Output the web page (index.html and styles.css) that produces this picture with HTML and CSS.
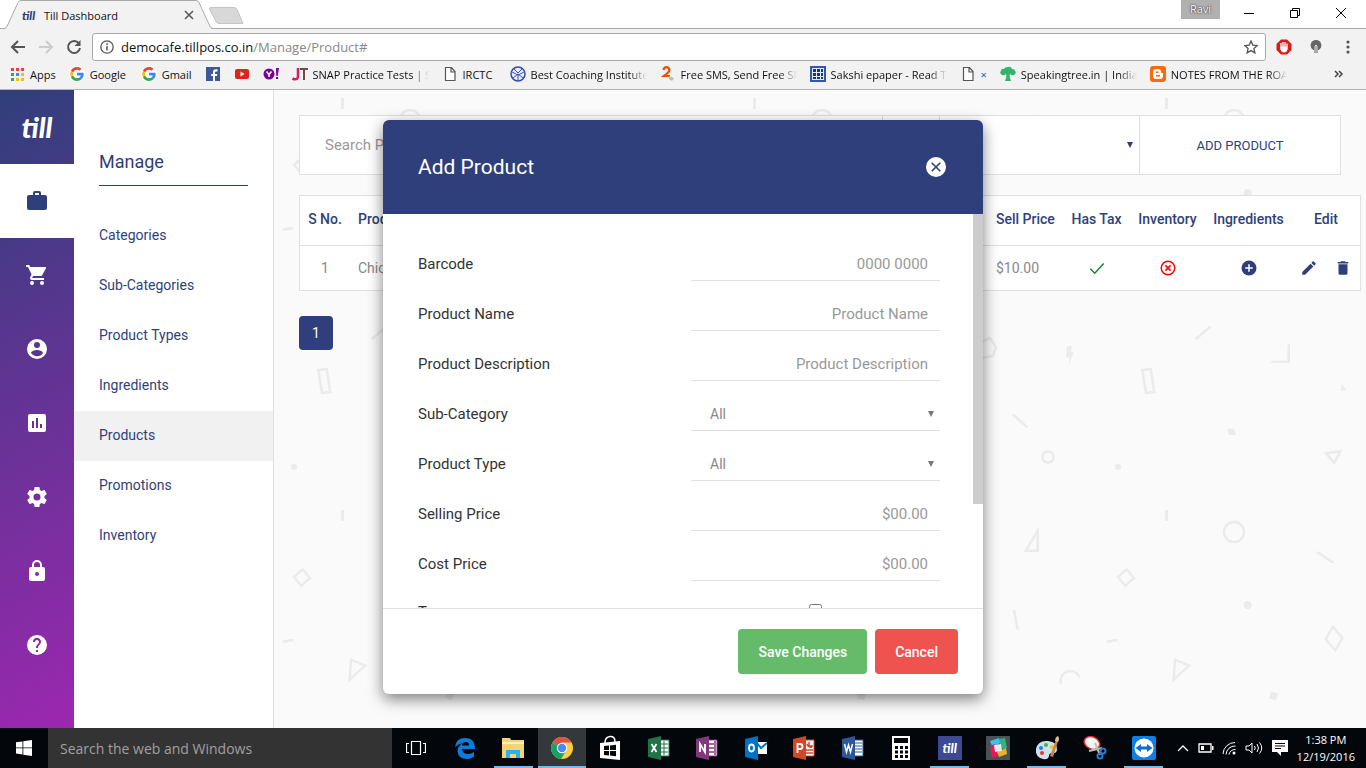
FILE: index.html
```html
<!DOCTYPE html>
<html lang="en">
<head>
<meta charset="utf-8">
<title>Till Dashboard</title>
<link rel="stylesheet" href="styles.css">
</head>
<body>
<header class="browser">
  <div class="tabstrip">
    <svg class="tab-shape" width="250" height="29" viewBox="0 0 250 29" aria-hidden="true">
      <path d="M0 28.500H6L18 2.500Q19 .500 21 .500H196Q198 .500 199 2.500L211 28.500V29H0Z" fill="#f2f2f2"/>
      <path d="M0 28.500H4Q6 28.500 7 26.500L18 2.500Q19 .500 21 .500H196Q198 .500 199 2.500L210 26.500Q211 28.500 213 28.500H250" fill="none" stroke="#aaa"/>
      <path d="M211 7.500H234Q236 7.500 237 9.500L243 23.500H219Q217 23.500 216 21.500L209.500 9Q209 7.500 211 7.500Z" fill="#d8d8d8" stroke="#c4c4c4"/>
    </svg>
    <div class="tab">
      <span class="tab-logo">till</span>
      <span class="tab-title">Till Dashboard</span>
      <button class="plain" aria-label="Close tab"><svg width="10" height="10" viewBox="0 0 10 10"><path d="M1 1l8 8M9 1L1 9" stroke="#555" stroke-width="1.500"/></svg></button>
    </div>
    <div class="window-controls">
      <span class="profile">Ravi</span>
      <button class="plain win" aria-label="Minimize"><svg width="10" height="10"><path d="M0 5.500h10" stroke="#000"/></svg></button>
      <button class="plain win" aria-label="Restore"><svg width="10" height="10"><path d="M.5 2.500h7v7h-7zM2.500 2.500v-2h7v7h-2" fill="none" stroke="#000"/></svg></button>
      <button class="plain win" aria-label="Close"><svg width="10" height="10"><path d="M0 0l10 10M10 0L0 10" stroke="#000"/></svg></button>
    </div>
  </div>
  <div class="toolbar">
    <button class="plain nav" aria-label="Back"><svg width="16" height="14" viewBox="0 0 16 14"><path d="M15 7H2M8 1L2 7l6 6" fill="none" stroke="#555" stroke-width="2"/></svg></button>
    <button class="plain nav" aria-label="Forward"><svg width="16" height="14" viewBox="0 0 16 14"><path d="M1 7h13M8 1l6 6-6 6" fill="none" stroke="#ccc" stroke-width="2"/></svg></button>
    <button class="plain nav" aria-label="Reload"><svg width="16" height="16" viewBox="0 0 16 16"><path d="M13 4.500A6 6 0 1 0 14 9" fill="none" stroke="#555" stroke-width="2"/><path d="M14.500 1v6h-6z" fill="#555"/></svg></button>
    <div class="omnibox">
      <svg width="14" height="14" viewBox="0 0 14 14"><circle cx="7" cy="7" r="6.200" fill="none" stroke="#555" stroke-width="1.300"/><path d="M7 6v4.500M7 3.300v1.600" stroke="#555" stroke-width="1.500"/></svg>
      <span class="url">democafe.tillpos.co.in<span class="path">/Manage/Product#</span></span>
      <svg width="14" height="14" viewBox="0 0 14 14"><path d="M7 1l1.800 4.100 4.500.4-3.400 3 1 4.400L7 10.600l-3.900 2.300 1-4.400-3.400-3 4.500-.4z" fill="none" stroke="#555" stroke-width="1.300"/></svg>
    </div>
    <div class="extensions">
      <svg width="16" height="16" viewBox="0 0 16 16"><path d="M5 .5h6L15.500 5v6L11 15.500H5L.5 11V5z" fill="#dd1a1a"/><path d="M5 9V4M7 8V3M9 8V3M11 8V4.500" stroke="#fff" stroke-width="1.300"/><path d="M4.400 7.500h7.200V10q-.6 3.500-3.600 3.500T4 9z" fill="#fff"/></svg>
      <svg width="12" height="14" viewBox="0 0 12 14"><path d="M6 0a5.300 5.300 0 0 1 3 9.700V10H3v-.3A5.300 5.300 0 0 1 6 0z" fill="#666"/><path d="M5 10V6q1-2 2 0v4" stroke="#ddd" fill="#888"/><path d="M4 10h4v3H4z" fill="#aaa"/></svg>
      <svg width="4" height="14" viewBox="0 0 4 14" fill="#555"><circle cx="2" cy="2" r="1.600"/><circle cx="2" cy="7" r="1.600"/><circle cx="2" cy="12" r="1.600"/></svg>
    </div>
  </div>
  <nav class="bookmarks" aria-label="Bookmarks">
    <a href="#"><svg width="16" height="16" viewBox="0 0 16 16"><g fill="#ea4335"><path d="M2 2h3v3H2zM7 2h3v3H7zM12 2h3v3h-3z"/></g><path d="M2 7h3v3H2z" fill="#34a853"/><path d="M7 7h3v3H7z" fill="#4285f4"/><path d="M12 7h3v3h-3zM7 12h3v3H7zM12 12h3v3h-3z" fill="#fbbc05"/><path d="M2 12h3v3H2z" fill="#34a853"/></svg><span>Apps</span></a>
    <a href="#"><svg width="16" height="16" viewBox="0 0 48 48"><use href="#google-g"/></svg><span class="mail">Google</span></a>
    <a href="#"><svg width="16" height="16" viewBox="0 0 48 48"><use href="#google-g"/></svg><span>Gmail</span></a>
    <a href="#" aria-label="Facebook"><svg width="16" height="16" viewBox="0 0 16 16"><path d="M1 1h14v14H1z" fill="#3b5998"/><path d="M10 15V10h2l.4-2H10V6.500q0-1.100 1.200-1.100h1.300V3.300H11Q8 3.300 8 6v2H6.200v2H8v5z" fill="#fff"/></svg></a>
    <a href="#" aria-label="YouTube"><svg width="16" height="16" viewBox="0 0 16 16"><rect x="1" y="3" width="14" height="10" rx="2" fill="#e62117"/><path d="M6.500 5.500v5l4-2.500z" fill="#fff"/></svg></a>
    <a href="#" aria-label="Yahoo"><svg width="16" height="16" viewBox="0 0 16 16"><circle cx="6" cy="8" r="5.500" fill="#7b0099"/><path d="M3.500 5.500L6 8.500l2.500-3M6 8.500V11" stroke="#fff" stroke-width="1.500" fill="none"/><path d="M13 2h3l-1.300 8h-1.400zM13 11h2v2h-2z" fill="#7b0099"/></svg></a>
    <a href="#"><svg width="16" height="16" viewBox="0 0 16 16"><path d="M6 2v8q0 4-4 3.200L.5 12.500" fill="none" stroke="#d81b60" stroke-width="2.500"/><path d="M8 3h8M12 3v11" stroke="#6d4c41" stroke-width="2"/></svg><span class="long">SNAP Practice Tests | SNAP</span></a>
    <a href="#"><svg width="16" height="16" viewBox="0 0 16 16"><use href="#page"/></svg><span class="short">IRCTC</span></a>
    <a href="#"><svg width="16" height="16" viewBox="0 0 16 16"><circle cx="8" cy="8" r="7" fill="#e8edfa" stroke="#3949ab" stroke-width="1.500"/><path d="M2 6l6 3 6-3M8 9v6M4 3l4 4 4-4M3 12l5-4 5 4" stroke="#3f51b5" fill="none"/></svg><span class="long">Best Coaching Institute</span></a>
    <a href="#"><svg width="16" height="16" viewBox="0 0 16 16"><path d="M3.500 4Q4 1.200 6.500 1.200T9.500 4Q9.500 6 4 10h6" fill="none" stroke="#e65100" stroke-width="2.200"/><path d="M9 10l5 2-2 3-3-2z" fill="#bbb"/></svg><span class="long">Free SMS, Send Free SMS</span></a>
    <a href="#"><svg width="16" height="16" viewBox="0 0 16 16"><path d="M0 0h16v16H0z" fill="#3157b5"/><path d="M2 2h12v12H2z" fill="#e3eaf5"/><path d="M3 3h3v3H3zM7 3h3v3H7zM11 3h2v3h-2zM3 7h3v3H3zM7 7h3v3H7zM11 7h2v3h-2zM3 11h3v2H3zM7 11h3v2H7zM11 11h2v2h-2z" fill="#123c6b"/></svg><span class="long">Sakshi epaper - Read Telugu</span></a>
    <a href="#"><svg width="16" height="16" viewBox="0 0 16 16"><use href="#page"/></svg><span class="blue">×</span></a>
    <a href="#"><svg width="16" height="16" viewBox="0 0 16 16"><path d="M8 1q3-1 4 2 3 0 3 2 2 2-1 4-2 1-4-1-1 3 1 7H5q2-4 1-7-2 2-4 1-3-2-1-4 0-3 3-2 1-2 4-2z" fill="#35b368"/></svg><span class="long">Speakingtree.in | India's</span></a>
    <a href="#"><svg width="16" height="16" viewBox="0 0 16 16"><rect width="16" height="16" rx="3" fill="#f96a0e"/><path d="M6 3h2.500Q11 3 11 6q0 1 1 1 1 0 1 1v2q0 3-3 3H6q-3 0-3-3V6q0-3 3-3z" fill="#fff"/><path d="M6 6.200h2.500M6 9.800h4" stroke="#f96a0e" stroke-width="1.500"/></svg><span class="long">NOTES FROM THE ROAD</span></a>
    <button class="plain more" aria-label="More bookmarks"><svg width="10" height="8" viewBox="0 0 10 8"><path d="M1 1l3 3-3 3M5 1l3 3-3 3" fill="none" stroke="#444" stroke-width="1.500"/></svg></button>
  </nav>
</header>

<div class="app">
  <nav class="rail" aria-label="Main">
    <a class="logo" href="#">till</a>
    <a class="active" href="#" aria-label="Manage"><svg viewBox="0 0 24 24"><path d="M10 2h4a2 2 0 0 1 2 2v2h4a2 2 0 0 1 2 2v11a2 2 0 0 1-2 2H4a2 2 0 0 1-2-2V8a2 2 0 0 1 2-2h4V4a2 2 0 0 1 2-2zm4 4V4h-4v2z"/></svg></a>
    <a href="#" aria-label="Orders"><svg viewBox="0 0 24 24"><path d="M17 18a2 2 0 1 1 0 4 2 2 0 0 1 0-4zM1 2h3.270l.94 2H20a1 1 0 0 1 .88 1.480l-3.580 6.470c-.34.610-1 1.050-1.750 1.050H8.100l-.9 1.630-.03.120c0 .140.110.250.250.250H19v2H7a2 2 0 0 1-2-2c0-.350.090-.680.240-.960l1.360-2.450L3 4H1zm6 16a2 2 0 1 1 0 4 2 2 0 0 1 0-4z"/></svg></a>
    <a href="#" aria-label="Customers"><svg viewBox="0 0 24 24"><path d="M12 19.200c-2.500 0-4.710-1.280-6-3.200.03-2 4-3.100 6-3.100s5.970 1.100 6 3.100a7.230 7.230 0 0 1-6 3.200M12 5a3 3 0 1 1 0 6 3 3 0 0 1 0-6m0-3a10 10 0 1 0 0 20 10 10 0 0 0 0-20z"/></svg></a>
    <a href="#" aria-label="Reports"><svg viewBox="0 0 24 24"><path d="M19 3H5a2 2 0 0 0-2 2v14a2 2 0 0 0 2 2h14a2 2 0 0 0 2-2V5a2 2 0 0 0-2-2zM9 17H7v-7h2zm4 0h-2V7h2zm4 0h-2v-4h2z"/></svg></a>
    <a href="#" aria-label="Settings"><svg viewBox="0 0 24 24"><path d="M12 15.500a3.500 3.500 0 1 1 0-7 3.500 3.500 0 0 1 0 7m7.430-2.530c.04-.320.070-.640.070-.970s-.03-.660-.070-1l2.110-1.630c.190-.150.240-.420.120-.640l-2-3.460c-.120-.220-.390-.310-.610-.220l-2.490 1c-.520-.390-1.060-.730-1.690-.980l-.370-2.650A.506.506 0 0 0 14 2h-4c-.250 0-.460.180-.5.420l-.370 2.650c-.630.250-1.170.590-1.690.980l-2.490-1c-.220-.090-.490 0-.610.220l-2 3.460c-.130.220-.070.490.120.640L4.570 11c-.040.340-.070.670-.070 1s.03.650.070.970l-2.110 1.660c-.190.150-.250.420-.120.640l2 3.460c.12.220.39.300.61.220l2.490-1.010c.52.400 1.060.740 1.690.990l.37 2.650c.04.240.25.420.5.420h4c.25 0 .46-.180.5-.420l.37-2.650c.63-.260 1.170-.590 1.690-.990l2.490 1.010c.22.080.49 0 .61-.220l2-3.460c.12-.220.07-.490-.12-.640z"/></svg></a>
    <a href="#" aria-label="Lock"><svg viewBox="0 0 24 24"><path d="M12 17a2 2 0 1 0 0-4 2 2 0 0 0 0 4m6-9a2 2 0 0 1 2 2v10a2 2 0 0 1-2 2H6a2 2 0 0 1-2-2V10a2 2 0 0 1 2-2h1V6a5 5 0 0 1 10 0v2zm-6-5a3 3 0 0 0-3 3v2h6V6a3 3 0 0 0-3-3z"/></svg></a>
    <a href="#" aria-label="Help"><svg viewBox="0 0 24 24"><path d="M15.070 11.250l-.9.920C13.450 12.890 13 13.500 13 15h-2v-.5c0-1.110.450-2.110 1.170-2.830l1.240-1.260A2 2 0 1 0 10 9H8a4 4 0 1 1 7.070 2.250M13 19h-2v-2h2M12 2a10 10 0 1 0 0 20 10 10 0 0 0 0-20z"/></svg></a>
  </nav>
  <nav class="submenu" aria-labelledby="manage-title">
    <h2 id="manage-title">Manage</h2>
    <ul>
      <li><a href="#">Categories</a></li>
      <li><a href="#">Sub-Categories</a></li>
      <li><a href="#">Product Types</a></li>
      <li><a href="#">Ingredients</a></li>
      <li><a class="current" href="#">Products</a></li>
      <li><a href="#">Promotions</a></li>
      <li><a href="#">Inventory</a></li>
    </ul>
  </nav>
  <main class="content">
    <svg class="backdrop" aria-hidden="true">
      <defs>
        <pattern id="confetti" patternUnits="userSpaceOnUse" x="-138" y="0" width="412" height="412">
          <g fill="none" stroke="#ebebeb" stroke-width="2.500">
            <path d="M206.500 8v11" stroke-width="3"/>
            <circle cx="274" cy="30" r="10"/>
            <path d="M166.700 67.300l7.300 8.700-8.700 7.700-7.300-8.700zM65.700 48.700h12v-20zM357 50l16.300 10.700M54 108l3.700 19.700M146.700 139.700l10.600-1.700M373 124.700l9.300 11.300-7 12.300-9.600-11.300zM215 157.700l14 6-15.300 14zM101 182a9.700 9.700 0 1 1 18.700-6.300"/>
            <path d="M52.700 324.300l14.600 13M366 363.300l14.300-2-6 11.400zM30 248l6 9-3 9-11 2-2-15zM235.700 249.300l15-13M182.300 280l8.400-1 3.600 23-8.300 1z"/>
            <circle cx="88" cy="367" r="5.600"/>
          </g>
          <g fill="#ebebeb">
            <circle cx="287.700" cy="103" r="4"/>
            <circle cx="158" cy="377" r="3"/>
            <path d="M311 189.500l7 1.800-1.800 7-7-1.800zM267 338.700h7l2 6.300h-6.700zM106.700 256.700l5.300-1.400-1 6.700 2.700.3-5.400 14.400 1.400-9-3.700-.4zM310 272.700l2-2h15.300v-15l2.700-3v20zM381.700 294.300l4.600 5.400-5.300 1.300z"/>
          </g>
        </pattern>
      </defs>
      <rect width="100%" height="100%" fill="url(#confetti)"/>
    </svg>
    <form class="filters">
      <input type="search" placeholder="Search Product" aria-label="Search product">
      <button class="find" type="button" aria-label="Search"><svg width="18" height="18" viewBox="0 0 18 18"><path d="M12 12l5 5M7 13A6 6 0 1 0 7 1a6 6 0 0 0 0 12z" fill="none" stroke="#2f3f7b" stroke-width="2"/></svg></button>
      <div class="picker">
        <select aria-label="Category"><option>All</option></select>
        <svg width="6" height="6" viewBox="0 0 6 6"><path d="M0 0h6L3 6z" fill="#2f3f7b"/></svg>
      </div>
      <button class="add" type="button">ADD PRODUCT</button>
    </form>
    <div class="table-wrap">
      <table>
        <colgroup><col class="c-no"><col><col class="c-price"><col class="c-tax"><col class="c-inv"><col class="c-ing"><col class="c-edit"></colgroup>
        <thead><tr><th class="mid">S No.</th><th>Product</th><th>Sell Price</th><th class="mid">Has Tax</th><th class="mid">Inventory</th><th class="mid">Ingredients</th><th class="mid">Edit</th></tr></thead>
        <tbody><tr>
          <td class="mid">1</td><td>Chicken</td><td>$10.00</td>
          <td class="mid"><svg width="18" height="18" viewBox="0 0 24 24"><path d="M3 13l6 6L21 6" fill="none" stroke="#178536" stroke-width="2"/></svg></td>
          <td class="mid"><svg width="18" height="18" viewBox="0 0 24 24"><circle cx="12" cy="12" r="9" fill="none" stroke="red" stroke-width="2"/><path d="M8.500 8.500l7 7M15.500 8.500l-7 7" stroke="red" stroke-width="2"/></svg></td>
          <td class="mid"><button class="plain" aria-label="Add ingredient"><svg width="18" height="18" viewBox="0 0 24 24"><circle cx="12" cy="12" r="10" fill="#2f3f7b"/><path d="M12 7v10M7 12h10" stroke="#fff" stroke-width="2"/></svg></button></td>
          <td><div class="row-actions"><button class="plain" aria-label="Edit"><svg width="18" height="18" viewBox="0 0 24 24" fill="#2f3f7b"><path d="M20.710 7.040c.39-.390.390-1.040 0-1.410l-2.340-2.340c-.370-.390-1.020-.390-1.410 0l-1.840 1.830 3.750 3.750M3 17.250V21h3.750L17.810 9.930l-3.750-3.750z"/></svg></button><button class="plain" aria-label="Delete"><svg width="18" height="18" viewBox="0 0 24 24" fill="#2f3f7b"><path d="M19 4h-3.500l-1-1h-5l-1 1H5v2h14M6 19a2 2 0 0 0 2 2h8a2 2 0 0 0 2-2V7H6z"/></svg></button></div></td>
        </tr></tbody>
      </table>
    </div>
    <button class="page-number" type="button">1</button>
  </main>

  <div class="overlay">
    <section class="modal" role="dialog" aria-labelledby="modal-title">
      <header class="modal-head">
        <h1 id="modal-title">Add Product</h1>
        <button class="plain" aria-label="Close dialog"><svg width="24" height="24" viewBox="0 0 24 24"><circle cx="12" cy="12" r="10" fill="#fff"/><path d="M7.700 7.700l8.600 8.600M16.300 7.700l-8.600 8.600" stroke="#2f3f7b" stroke-width="1.600"/></svg></button>
      </header>
      <div class="modal-body">
        <form class="fields">
          <label for="barcode">Barcode</label><input id="barcode" type="text" placeholder="0000 0000">
          <label for="name">Product Name</label><input id="name" type="text" placeholder="Product Name">
          <label for="desc">Product Description</label><input id="desc" type="text" placeholder="Product Description">
          <label for="subcat">Sub-Category</label><div class="choice"><select id="subcat"><option>All</option></select><svg width="6" height="6" viewBox="0 0 6 6"><path d="M0 0h6L3 6z" fill="#777"/></svg></div>
          <label for="ptype">Product Type</label><div class="choice"><select id="ptype"><option>All</option></select><svg width="6" height="6" viewBox="0 0 6 6"><path d="M0 0h6L3 6z" fill="#777"/></svg></div>
          <label for="sell">Selling Price</label><input id="sell" type="text" placeholder="$00.00">
          <label for="cost">Cost Price</label><input id="cost" type="text" placeholder="$00.00">
          <label class="tick-label" for="tax">Tax</label><div class="tick"><input id="tax" type="checkbox"></div>
        </form>
        <div class="scroll-thumb"></div>
      </div>
      <footer class="modal-foot">
        <button class="save" type="button">Save Changes</button>
        <button class="cancel" type="button">Cancel</button>
      </footer>
    </section>
  </div>
</div>

<footer class="taskbar">
  <button class="plain start" aria-label="Start"><svg width="16" height="16" viewBox="0 0 16 16" fill="#fff"><path d="M0 2.300L6.500 1.400v6.100H0zM7.300 1.300L16 0v7.500H7.300zM0 8.300h6.500v6.200L0 13.600zM7.300 8.300H16V16l-8.700-1.300z"/></svg></button>
  <input class="win-search" type="text" placeholder="Search the web and Windows" aria-label="Search the web and Windows">
  <div class="apps">
    <button class="plain" aria-label="Task view"><svg width="20" height="16" viewBox="0 0 20 16"><path d="M5.500 1.500h9v13h-9zM3 3.500H.5v9H3M17 3.500h2.500v9H17" fill="none" stroke="#fff" stroke-width="1.200"/></svg></button>
    <button class="plain" aria-label="Edge"><svg width="22" height="22" viewBox="0 0 22 22"><path d="M1 10Q2 1 11 1q10 0 10 11H8q.500 5 6 5 3 0 6-2v4.500Q17 22 13 22 4 22 3.500 14 3.500 9 9 6 4 7 1 10zm7-1.500h7Q15 4.500 11.500 5 8.500 5 8 8.500z" fill="#0b7bdc"/></svg></button>
    <button class="plain open" aria-label="Explorer"><svg width="22" height="22" viewBox="0 0 22 22"><path d="M0 1h8l1 2h13v18H0z" fill="#f5d573"/><path d="M0 5h22v2H0z" fill="#fff0b5"/><path d="M4 21v-8h14v8h-4v-4H8v4z" fill="#30b0e8"/></svg></button>
    <button class="plain open focused" aria-label="Chrome"><svg width="22" height="22" viewBox="0 0 22 22"><circle cx="11" cy="11" r="11" fill="#ffcd40"/><path d="M11 11L1.500 5.500A11 11 0 0 1 20.500 5.500H11z" fill="#de5246"/><path d="M1.500 5.500A11 11 0 0 0 10 22l5.500-9L11 11z" fill="#1aa260"/><circle cx="11" cy="11" r="5.200" fill="#fff"/><circle cx="11" cy="11" r="4.200" fill="#4a8af4"/></svg></button>
    <button class="plain" aria-label="Store"><svg width="22" height="26" viewBox="0 0 22 26"><path d="M1 8l20-2v19L1 23z" fill="#fff"/><path d="M6 8Q6 2 11 1.500T16 7" fill="none" stroke="#fff" stroke-width="1.500"/><path d="M5 11l5-.5V15H5zM11 10.400l6-.6V15h-6zM5 16h5v4.500L5 20zM11 16h6v5.200l-6-.6z" fill="#05070b"/></svg></button>
    <button class="plain" aria-label="Excel"><svg width="22" height="24" viewBox="0 0 22 24"><path d="M11 4h10v16H11z" fill="#fff" stroke="#217346"/><path d="M12 8h8M12 12h8M12 16h8M16 5v14" stroke="#217346"/><path d="M0 3l13-3v24L0 21z" fill="#217346"/><path d="M3.500 8l5 8M8.500 8l-5 8" stroke="#fff" stroke-width="1.800"/></svg></button>
    <button class="plain" aria-label="OneNote"><svg width="22" height="24" viewBox="0 0 22 24"><path d="M11 4h10v16H11z" fill="#fff" stroke="#80397b"/><path d="M13 8h5M13 12h5M13 16h5M19 5v14" stroke="#80397b" stroke-width="1.500"/><path d="M0 3l13-3v24L0 21z" fill="#80397b"/><path d="M4 16V8l5 8V8" stroke="#fff" stroke-width="1.800" fill="none"/></svg></button>
    <button class="plain" aria-label="Outlook"><svg width="22" height="24" viewBox="0 0 22 24"><path d="M11 6h11v12H11z" fill="#fff"/><path d="M12 7l4 5 6-5" fill="none" stroke="#0072c6" stroke-width="2"/><path d="M0 3l13-3v24L0 21z" fill="#0072c6"/><ellipse cx="6.500" cy="12" rx="2.500" ry="3.500" fill="none" stroke="#fff" stroke-width="1.800"/></svg></button>
    <button class="plain" aria-label="PowerPoint"><svg width="22" height="24" viewBox="0 0 22 24"><path d="M11 4h10v16H11z" fill="#fff" stroke="#d24726"/><path d="M13 14h7M13 17h7M16 6v4h4M14 8a4 4 0 0 0 5 3" stroke="#d24726" fill="none" stroke-width="1.500"/><path d="M0 3l13-3v24L0 21z" fill="#d24726"/><path d="M4.500 17V8H7q2.500 0 2.500 2.500T7 13H4.500" stroke="#fff" stroke-width="1.800" fill="none"/></svg></button>
    <button class="plain" aria-label="Word"><svg width="22" height="24" viewBox="0 0 22 24"><path d="M11 4h10v16H11z" fill="#fff" stroke="#2b579a"/><path d="M12 7h8M12 10h8M12 13h8M12 16h8" stroke="#2b579a"/><path d="M0 3l13-3v24L0 21z" fill="#2b579a"/><path d="M2.500 8l2 8 2-7 2 7 2-8" stroke="#fff" stroke-width="1.500" fill="none"/></svg></button>
    <button class="plain" aria-label="Calculator"><svg width="18" height="24" viewBox="0 0 18 24"><path d="M0 0h18v24H0z" fill="#fff"/><path d="M2 2h14v5H2zM3 10h3v3H3zM8 10h3v3H8zM13 10h3v3h-3zM3 14.500h3v3H3zM8 14.500h3v3H8zM13 14.500h3v3h-3zM3 19h3v3H3zM8 19h3v3H8zM13 19h3v3h-3z" fill="#05070b"/></svg></button>
    <button class="plain open" aria-label="Till"><span class="till-app">till</span></button>
    <button class="plain" aria-label="Slack"><svg width="24" height="24" viewBox="0 0 24 24"><path d="M0 0h24v24H0z" fill="#4a5157"/><path d="M4 5l9-3 2 5-9 3z" fill="#36c5f0"/><path d="M13 3l6-1 2 10-6 1z" fill="#2eb67d"/><path d="M4 10l5-2 3 12-6 2z" fill="#e8175d"/><path d="M11 16l9-4 1 6-8 3z" fill="#ecb22e"/><path d="M8 9l7-1 1 7-7 1z" fill="#e8eaee"/></svg></button>
    <button class="plain open" aria-label="Paint"><svg width="24" height="24" viewBox="0 0 24 24"><path d="M1 13Q3 4 13 5q10 1 9 9-1 4-5 3-3 0-3 3-1 4-6 3-8-2-7-10z" fill="#cfe0ee"/><circle cx="6" cy="12" r="2" fill="#2c7be5"/><circle cx="11" cy="9" r="2" fill="#3cb54a"/><circle cx="17" cy="11" r="2" fill="#f6c31c"/><circle cx="7" cy="17" r="2" fill="#e03c31"/><path d="M15 20L21 4l2 1-5 16z" fill="#c9873c"/><path d="M20 5q0-4 3-5 2 3 0 6z" fill="#e7bd83"/></svg></button>
    <button class="plain" aria-label="Snipping Tool"><svg width="24" height="24" viewBox="0 0 24 24"><ellipse cx="9" cy="7" rx="8" ry="6" transform="rotate(25 9 7)" fill="#f4f4f4" stroke="#d33" stroke-width="1.500"/><path d="M6 15l13-3M12 7l5 12" stroke="#bbb" stroke-width="2"/><circle cx="20" cy="15" r="2.500" fill="none" stroke="#2c7bc5" stroke-width="2"/><circle cx="17" cy="20" r="2.500" fill="none" stroke="#2c7bc5" stroke-width="2"/></svg></button>
    <button class="plain open" aria-label="TeamViewer"><svg width="24" height="24" viewBox="0 0 24 24"><rect width="24" height="24" rx="2" fill="#0e7fe4"/><circle cx="12" cy="12" r="9.500" fill="#fff"/><path d="M3.500 12L9 8v2.500h6V8l5.500 4-5.500 4v-2.500H9V16z" fill="#0e6fd0"/></svg></button>
  </div>
  <div class="tray">
    <svg width="12" height="8" viewBox="0 0 12 8"><path d="M1 7l5-5 5 5" fill="none" stroke="#fff" stroke-width="1.300"/></svg>
    <svg width="16" height="10" viewBox="0 0 16 10"><path d="M1 1h12v8H1z" fill="none" stroke="#fff" stroke-width="1.300"/><path d="M3 3h3v4H3zM14 3h1.500v4H14z" fill="#fff"/></svg>
    <svg width="14" height="14" viewBox="0 0 14 14"><path d="M1 13A12 12 0 0 1 13 1.500M4 13.500A9 9 0 0 1 13.500 5M7 13.500A6 6 0 0 1 13.500 8.500" fill="none" stroke="#fff"/><circle cx="12" cy="12" r="1.500" fill="#fff"/></svg>
    <svg width="18" height="14" viewBox="0 0 18 14"><path d="M1 5h3l3-3v10L4 9H1z" fill="none" stroke="#fff"/><path d="M9.500 5q1.500 2 0 4M12 3q3 4 0 8M14.500 1.500q4.500 5.500 0 11" fill="none" stroke="#fff"/></svg>
    <svg width="16" height="16" viewBox="0 0 16 16"><path d="M0 0h16v12H9v4l-4-4H0z" fill="#fff"/><path d="M3 3.500h10M3 6h10M3 8.500h6" stroke="#05070b"/></svg>
    <div class="clock"><span>1:38 PM</span><span>12/19/2016</span></div>
  </div>
</footer>

<svg class="defs" width="0" height="0" aria-hidden="true">
  <symbol id="google-g" viewBox="0 0 48 48"><circle cx="24" cy="24" r="24" fill="#fff"/><path fill="#ea4335" d="M24 11c3.500 0 6 1.400 7.800 3.100l5.700-5.600C34 5 29.500 3 24 3 16 3 9 7.600 5.700 14.400l6.600 5.100C14 14.600 18.500 11 24 11z"/><path fill="#4285f4" d="M44 24.500c0-1.700-.2-3-.4-4.300H24v8h11.300c-.3 1.900-1.500 4.700-4.300 6.600l6.400 5c3.900-3.600 6.600-8.900 6.600-15.300z"/><path fill="#fbbc05" d="M12.300 28.500a13 13 0 0 1 0-9l-6.600-5.100a21 21 0 0 0 0 19.200z"/><path fill="#34a853" d="M24 45c5.700 0 10.400-1.900 13.400-5.200l-6.400-5c-1.700 1.200-4 2-7 2-5.500 0-10-3.500-11.700-8.300l-6.600 5.100C9 40.400 16 45 24 45z"/></symbol>
  <symbol id="page" viewBox="0 0 16 16"><path d="M3.500 1.500h6l3.500 4v9H3.500zM9 1.500V6h4" fill="#fff" stroke="#555" stroke-width="1.200"/></symbol>
</svg>
</body>
</html>
```
FILE: styles.css
```css
* { box-sizing: border-box; }
body {
  margin: 0;
  height: 100vh;
  display: flex;
  flex-direction: column;
  overflow: hidden;
  font-family: Roboto, "Liberation Sans", sans-serif;
  background: #fafafa;
}
button, input, select { font-family: inherit; }
a { text-decoration: none; }
svg { flex: none; display: block; }
.defs { position: absolute; }
.plain {
  border: 0;
  padding: 0;
  background: none;
  display: inline-flex;
  align-items: center;
  justify-content: center;
  vertical-align: middle;
}

/* Browser frame */
.browser {
  flex: none;
  font-family: "Open Sans", "Noto Sans", sans-serif;
  font-size: 11px;
  color: #111;
  background: #f2f2f2;
  border-bottom: 1px solid #b4b4b4;
}
.tabstrip {
  position: relative;
  height: 29px;
  display: flex;
  justify-content: space-between;
  background: #fff;
  border-bottom: 1px solid #aaa;
}
.tab-shape { position: absolute; left: 0; top: 0; }
.tab {
  position: relative;
  width: 194px;
  padding: 2px 0 0 22px;
  display: flex;
  align-items: center;
  gap: 7px;
}
.tab-logo {
  width: 15px;
  font: italic 900 12px Lato, sans-serif;
  color: #2f3f7b;
}
.tab-title { flex: 1; }
.window-controls { display: flex; align-items: flex-start; padding-right: 2px; }
.profile {
  width: 39px;
  height: 19px;
  line-height: 18px;
  margin-right: 6px;
  text-align: center;
  color: #fff;
  background: #b0b0b0;
  text-shadow: 0 0 2px #333, 0 0 1px #333;
}
.win { width: 46px; height: 26px; }
.toolbar {
  height: 36px;
  display: flex;
  align-items: center;
  padding: 0 2px 0 4px;
}
.nav { width: 28px; height: 28px; }
.omnibox {
  flex: 1;
  height: 28px;
  margin: 0 2px 0 4px;
  padding: 0 7px;
  display: flex;
  align-items: center;
  gap: 7px;
  background: #fff;
  border: 1px solid #aaa;
  border-radius: 3px;
}
.url { flex: 1; font-size: 13px; }
.path { color: #888; }
.extensions {
  display: grid;
  grid-template-columns: repeat(3, 32px);
  align-items: center;
  justify-items: center;
}
.bookmarks {
  height: 24px;
  padding: 0 22px 6px 9px;
  display: flex;
  align-items: center;
  gap: 13px;
}
.bookmarks a {
  display: flex;
  align-items: center;
  gap: 5px;
  color: #111;
  white-space: nowrap;
}
.bookmarks .blue { color: #1a66b8; }
.bookmarks .mail { min-width: 38px; }
.bookmarks .short { min-width: 34px; }
.bookmarks .long {
  width: 116px;
  overflow: hidden;
  -webkit-mask-image: linear-gradient(90deg, #000 85%, transparent);
  mask-image: linear-gradient(90deg, #000 85%, transparent);
}
.more { margin-left: auto; }

/* Application */
.app {
  position: relative;
  flex: 1;
  min-height: 0;
  display: flex;
}
.rail {
  flex: none;
  width: 74px;
  display: flex;
  flex-direction: column;
  background: linear-gradient(150deg, #2f3f7b, #9c27b0);
}
.rail a {
  height: 74px;
  display: flex;
  align-items: center;
  justify-content: center;
  fill: #fff;
}
.rail svg { width: 24px; height: 24px; }
.rail .active { background: #fff; fill: #2f3f7b; }
.rail .logo {
  font: italic 900 28px Lato, sans-serif;
  color: #fff;
}
.submenu {
  flex: none;
  width: 200px;
  background: #fff;
  border-right: 1px solid #e0e0e0;
}
.submenu h2 {
  margin: 48px 25px 25px;
  height: 48px;
  line-height: 48px;
  font-size: 18px;
  font-weight: 400;
  color: #2f3f7b;
  border-bottom: 1px solid #2f3f7b;
}
.submenu ul { margin: 0; padding: 0; list-style: none; }
.submenu a {
  display: block;
  padding: 0 0 2px 25px;
  line-height: 48px;
  font-size: 14px;
  color: #2f3f7b;
}
.submenu .current { background: #f1f1f1; }
.content {
  position: relative;
  flex: 1;
  min-width: 0;
  padding: 25px;
}
.backdrop {
  position: absolute;
  inset: 0;
  width: 100%;
  height: 100%;
}
.filters {
  position: relative;
  height: 60px;
  display: flex;
  background: #fff;
  border: 1px solid #e0e0e0;
}
.filters input {
  flex: 1;
  min-width: 0;
  padding: 0 25px;
  border: 0;
  font-size: 15px;
  background: none;
}
.filters input::placeholder, .fields input::placeholder { color: #999; }
.filters button, .picker {
  border: 0;
  border-left: 1px solid #e0e0e0;
  background: none;
}
.find { width: 57px; }
.find svg { margin: auto; }
.picker {
  width: 200px;
  display: flex;
  align-items: center;
  padding-right: 6px;
}
.picker select {
  flex: 1;
  height: 100%;
  padding: 0 15px;
  border: 0;
  appearance: none;
  background: none;
  font-size: 14px;
  color: #2f3f7b;
}
.filters .add {
  width: 201px;
  font-size: 13px;
  font-weight: 400;
  color: #2f3f7b;
}
.table-wrap {
  position: relative;
  margin: 20px -20px 25px 0;
  background: #fff;
  border: 1px solid #e0e0e0;
}
table {
  width: 100%;
  table-layout: fixed;
  border-collapse: collapse;
  font-size: 14px;
  color: #888;
}
.c-no { width: 50px; }
.c-price { width: 75px; }
.c-tax { width: 67px; }
.c-inv { width: 75px; }
.c-ing { width: 87px; }
.c-edit { width: 68px; }
th, td { padding: 0 8px; text-align: left; white-space: nowrap; }
th {
  height: 49px;
  padding-bottom: 2px;
  font-weight: 500;
  color: #2f3f7b;
  border-bottom: 1px solid #e0e0e0;
}
td { height: 45px; }
.mid { padding-left: 0; padding-right: 0; text-align: center; }
td.mid svg { margin: 0 auto; }
.row-actions { display: flex; justify-content: space-between; }
.page-number {
  position: relative;
  width: 34px;
  height: 34px;
  border: 0;
  border-radius: 4px;
  font-size: 14px;
  color: #fff;
  background: #2f3f7b;
}

/* Add product dialog */
.overlay {
  position: absolute;
  inset: 0;
  display: flex;
  justify-content: center;
  padding: 30px 20px 34px;
}
.modal {
  width: 600px;
  display: flex;
  flex-direction: column;
  background: #fff;
  border-radius: 6px;
  overflow: hidden;
  box-shadow: 0 5px 15px rgba(0, 0, 0, .5);
}
.modal-head {
  flex: none;
  height: 94px;
  padding: 0 35px;
  display: flex;
  align-items: center;
  justify-content: space-between;
  color: #fff;
  background: #2f3f7b;
}
.modal-head h1 { margin: 0; font-size: 21px; font-weight: 400; }
.modal-body {
  position: relative;
  flex: 1;
  min-height: 0;
  overflow: hidden;
}
.scroll-thumb {
  position: absolute;
  top: 0;
  right: 0;
  width: 10px;
  height: 290px;
  background: #ccc;
}
.fields {
  padding: 33px 43px 33px 35px;
  display: grid;
  grid-template-columns: 1fr 249px;
  grid-auto-rows: 34px;
  row-gap: 16px;
  font-size: 15px;
  line-height: 34px;
  color: #333;
}
.fields input[type="text"], .choice {
  min-width: 0;
  border: 0;
  border-bottom: 1px solid #e0e0e0;
}
.fields input[type="text"] {
  padding: 0 12px;
  text-align: right;
  font-size: 15px;
}
.choice { display: flex; align-items: center; padding-right: 6px; }
.choice select {
  flex: 1;
  height: 100%;
  padding: 0 19px;
  border: 0;
  appearance: none;
  background: none;
  font-size: 14px;
  color: #888;
}
.tick-label { line-height: 30px; }
.tick { display: flex; justify-content: center; align-items: flex-start; padding-top: 7px; }
.tick input { width: 13px; height: 13px; margin: 0; }
.modal-foot {
  flex: none;
  height: 86px;
  padding: 20px 25px;
  display: flex;
  justify-content: flex-end;
  gap: 8px;
  border-top: 1px solid #e0e0e0;
}
.modal-foot button {
  height: 45px;
  padding: 0 20px;
  border: 0;
  border-radius: 4px;
  font-size: 14px;
  font-weight: 500;
  color: #fff;
}
.modal-foot .save { background: #66bb6a; }
.modal-foot .cancel { background: #ef5350; }

/* Windows taskbar */
.taskbar {
  flex: none;
  height: 40px;
  display: flex;
  background: #03060b;
  color: #fff;
  font-family: "Open Sans", "Noto Sans", sans-serif;
}
.start { flex: none; width: 48px; }
.win-search {
  flex: none;
  width: 344px;
  padding: 0 12px;
  border: 0;
  background: #333;
  font-size: 14px;
}
.win-search::placeholder { color: #a0a0a0; }
.apps { flex: 1; display: flex; }
.apps button { flex: 1; min-width: 0; }
.apps .open {
  background: linear-gradient(#76b9ed, #76b9ed) bottom center / 39px 2px no-repeat;
}
.apps .focused {
  background-color: #33383d;
  background-size: 100% 2px;
}
.till-app {
  width: 24px;
  height: 24px;
  font: italic 900 13px/24px Lato, sans-serif;
  color: #fff;
  background: #3c4a94;
}
.tray {
  flex: none;
  width: 198px;
  padding: 0 11px 0 9px;
  display: flex;
  align-items: center;
  justify-content: space-between;
}
.clock {
  display: flex;
  flex-direction: column;
  align-items: center;
  font-size: 11px;
  line-height: 17px;
}
```
